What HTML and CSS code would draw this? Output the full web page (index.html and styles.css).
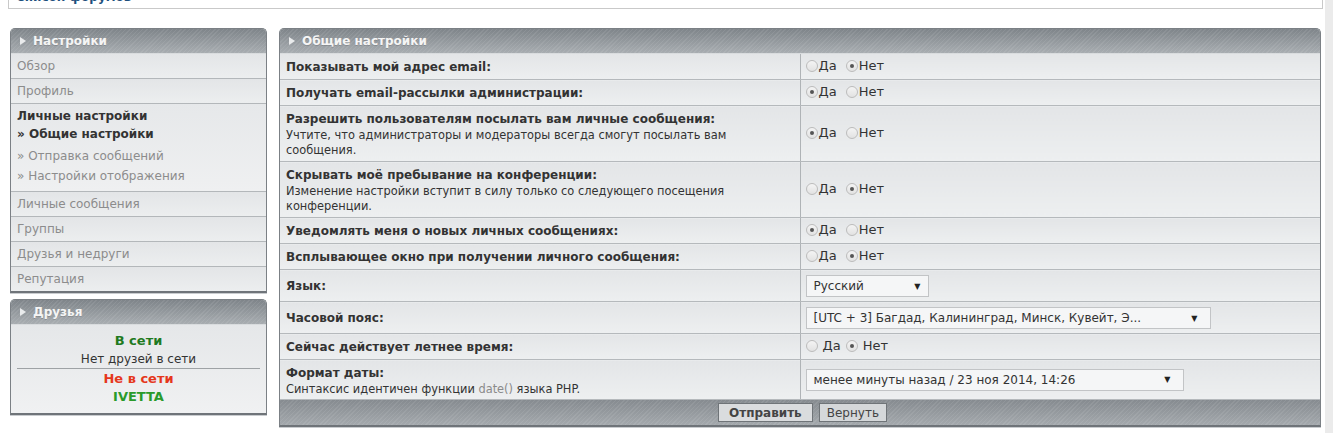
FILE: index.html
```html
<!DOCTYPE html>
<html lang="ru">
<head>
    <meta charset="UTF-8">
    <title>Личный раздел - Общие настройки</title>
    <link rel="stylesheet" href="styles.css">
</head>
<body>
<div class="page">
    <div class="navbar">
        <a href="#" class="crumbs">Список форумов</a>
        <span class="tz">Часовой пояс: UTC + 3 часа</span>
    </div>

    <div class="layout">
        <!-- Left column -->
        <aside class="sidebar">
            <div class="panel">
                <h3 class="panel-head"><span class="arrow"></span>Настройки</h3>
                <ul class="menu">
                    <li><a href="#">Обзор</a></li>
                    <li><a href="#">Профиль</a></li>
                    <li class="active">
                        <div class="menu-title">Личные настройки</div>
                        <div class="sub current">» Общие настройки</div>
                        <div class="sub"><a href="#">» Отправка сообщений</a></div>
                        <div class="sub"><a href="#">» Настройки отображения</a></div>
                    </li>
                    <li><a href="#">Личные сообщения</a></li>
                    <li><a href="#">Группы</a></li>
                    <li><a href="#">Друзья и недруги</a></li>
                    <li><a href="#">Репутация</a></li>
                </ul>
            </div>

            <div class="panel">
                <h3 class="panel-head"><span class="arrow"></span>Друзья</h3>
                <div class="friends">
                    <div class="online">В сети</div>
                    <div>Нет друзей в сети</div>
                    <div class="divider"></div>
                    <div class="offline">Не в сети</div>
                    <div class="friend">IVETTA</div>
                </div>
            </div>
        </aside>

        <!-- Main settings -->
        <main class="panel main-panel">
            <h3 class="panel-head"><span class="arrow"></span>Общие настройки</h3>
            <table class="settings">
                <colgroup><col class="col-label"><col></colgroup>
                <tr>
                    <td class="label"><b>Показывать мой адрес email:</b></td>
                    <td class="value"><span class="opt"><span class="radio"></span>Да</span><span class="opt"><span class="radio on"></span>Нет</span></td>
                </tr>
                <tr>
                    <td class="label"><b>Получать email-рассылки администрации:</b></td>
                    <td class="value"><span class="opt"><span class="radio on"></span>Да</span><span class="opt"><span class="radio"></span>Нет</span></td>
                </tr>
                <tr>
                    <td class="label"><b>Разрешить пользователям посылать вам личные сообщения:</b>
                        <div class="desc">Учтите, что администраторы и модераторы всегда смогут посылать вам сообщения.</div></td>
                    <td class="value"><span class="opt"><span class="radio on"></span>Да</span><span class="opt"><span class="radio"></span>Нет</span></td>
                </tr>
                <tr>
                    <td class="label"><b>Скрывать моё пребывание на конференции:</b>
                        <div class="desc">Изменение настройки вступит в силу только со следующего посещения конференции.</div></td>
                    <td class="value"><span class="opt"><span class="radio"></span>Да</span><span class="opt"><span class="radio on"></span>Нет</span></td>
                </tr>
                <tr>
                    <td class="label"><b>Уведомлять меня о новых личных сообщениях:</b></td>
                    <td class="value"><span class="opt"><span class="radio on"></span>Да</span><span class="opt"><span class="radio"></span>Нет</span></td>
                </tr>
                <tr>
                    <td class="label"><b>Всплывающее окно при получении личного сообщения:</b></td>
                    <td class="value"><span class="opt"><span class="radio"></span>Да</span><span class="opt"><span class="radio on"></span>Нет</span></td>
                </tr>
                <tr class="tall">
                    <td class="label"><b>Язык:</b></td>
                    <td class="value"><div class="select lang">Русский<span class="caret">▼</span></div></td>
                </tr>
                <tr class="tall">
                    <td class="label"><b>Часовой пояс:</b></td>
                    <td class="value"><div class="select tz-select">[UTC + 3] Багдад, Калининград, Минск, Кувейт, Э...<span class="caret">▼</span></div></td>
                </tr>
                <tr>
                    <td class="label"><b>Сейчас действует летнее время:</b></td>
                    <td class="value spaced"><span class="opt"><span class="radio"></span>Да</span><span class="opt"><span class="radio on"></span>Нет</span></td>
                </tr>
                <tr class="last">
                    <td class="label"><b>Формат даты:</b>
                        <div class="desc">Синтаксис идентичен функции <a href="#">date()</a> языка PHP.</div></td>
                    <td class="value"><div class="select date-select">менее минуты назад / 23 ноя 2014, 14:26<span class="caret">▼</span></div></td>
                </tr>
            </table>
            <div class="panel-foot">
                <button class="btn btn-main">Отправить</button>
                <button class="btn">Вернуть</button>
            </div>
        </main>
    </div>
</div>
</body>
</html>
```

FILE: styles.css
```css
* {
    margin: 0;
    padding: 0;
    box-sizing: border-box;
}

body {
    background: #ebebeb;
    font-family: 'DejaVu Sans', Verdana, sans-serif;
    font-size: 12px;
    color: #333;
}

a {
    text-decoration: none;
}

.page {
    display: flow-root;
    width: 1325px;
    min-height: 100vh;
    background: #fff;
}

/* top bar, mostly scrolled off */
.navbar {
    width: 1315px;
    height: 21px;
    margin: -12px 0 0 8px;
    padding: 0 7px 3px;
    border: 1px solid #c9c9c9;
    border-top: none;
    display: flex;
    justify-content: space-between;
    align-items: center;
}

.navbar .crumbs {
    color: #1d4f7c;
    font-weight: bold;
}

.navbar .tz {
    font-size: 11px;
    color: #444;
}

.layout {
    display: flex;
    align-items: flex-start;
    gap: 12px;
    margin-top: 19px;
    padding-left: 10px;
}

.sidebar {
    width: 257px;
    display: flex;
    flex-direction: column;
    gap: 6px;
}

.panel {
    border: 1px solid #7b8085;
    border-bottom: 2px solid #6f7479;
    border-radius: 5px 5px 0 0;
    overflow: hidden;
    background: #e8eaeb;
    box-shadow: 0 1px 0 #c9cccf;
}

.panel-head {
    height: 25px;
    padding-left: 9px;
    display: flex;
    align-items: center;
    color: #f5f5f5;
    font-size: 12px;
    font-weight: bold;
    text-shadow: 0 1px 0 rgba(0, 0, 0, 0.15);
    background:
        repeating-linear-gradient(135deg, rgba(255, 255, 255, 0.08) 0 1px, transparent 1px 3px),
        linear-gradient(#7f858a, #a8adb1);
    border-bottom: 1px solid #d9dcde;
}

.arrow {
    width: 0;
    height: 0;
    border-left: 6px solid #e9ebec;
    border-top: 4px solid transparent;
    border-bottom: 4px solid transparent;
    margin-right: 7px;
}

/* menu */
.menu {
    list-style: none;
}

.menu li {
    padding: 4px 6px;
    line-height: 16px;
    background: linear-gradient(#e3e5e7, #eceeef);
    border-bottom: 1px solid #b3b7ba;
}

.menu li:last-child {
    border-bottom: none;
}

.menu a {
    color: #8c8c8c;
}

.menu .active {
    padding-top: 3px;
    padding-bottom: 5px;
    background: linear-gradient(#e6e8ea, #eff0f1);
}

.menu-title {
    font-weight: bold;
    line-height: 18px;
}

.menu .sub {
    line-height: 20px;
}

.menu .sub.current {
    font-weight: bold;
    line-height: 18px;
    margin-bottom: 3px;
}

/* friends */
.friends {
    padding: 7px 6px 7px;
    text-align: center;
    line-height: 18px;
    background: linear-gradient(#e5e7e9, #f0f1f2);
}

.friends .online {
    color: #1f7a1f;
    font-weight: bold;
    font-size: 13px;
}

.friends .divider {
    height: 1px;
    background: #9ea2a5;
    margin: 0 0 1px;
}

.friends .offline {
    color: #e5371c;
    font-weight: bold;
    font-size: 13px;
}

.friends .friend {
    color: #2a9a2a;
    font-weight: bold;
    font-size: 13px;
}

/* main settings */
.main-panel {
    width: 1042px;
}

.settings {
    width: 100%;
    border-collapse: collapse;
    table-layout: fixed;
}

.settings .col-label {
    width: 520px;
}

.settings td {
    padding: 5px 6px 3px;
    vertical-align: middle;
    background: linear-gradient(#e3e5e7, #edeff0);
    border-bottom: 1px solid #b5b9bc;
}

.settings td.label {
    border-right: 1px solid #afb3b6;
}

.settings b {
    display: block;
    line-height: 17px;
}

.settings .desc {
    font-size: 11.4px;
    line-height: 15px;
}

.settings .last .desc {
    line-height: 14px;
}

.settings .desc a {
    color: #8a8a8a;
}

.settings td.value {
    padding: 4px 6px 4px 5px;
    font-size: 13px;
}

.settings tr.tall td.value {
    padding-top: 5px;
    padding-bottom: 4px;
}

.opt {
    display: inline-flex;
    align-items: center;
    margin-right: 9px;
    color: #333;
}

.radio {
    width: 12px;
    height: 12px;
    border: 1px solid #bcbcbc;
    border-radius: 50%;
    background: linear-gradient(#f4f4f4, #e2e2e2);
    margin-right: 1px;
    position: relative;
}

.radio.on::after {
    content: "";
    position: absolute;
    left: 3px;
    top: 3px;
    width: 4px;
    height: 4px;
    border-radius: 50%;
    background: #555;
}

.spaced .radio {
    margin-right: 5px;
}

.spaced .opt {
    margin-right: 5px;
}

.select {
    height: 22px;
    padding: 0 7px;
    display: flex;
    align-items: center;
    justify-content: space-between;
    border: 1px solid #c2c4c6;
    background: #f5f6f7;
    font-size: 12px;
    color: #333;
}

.select .caret {
    font-size: 8px;
    color: #222;
}

.select.lang {
    width: 123px;
}

.select.tz-select {
    width: 405px;
    padding-right: 12px;
}

.select.date-select {
    width: 378px;
    padding-right: 12px;
}

.panel-foot {
    height: 25px;
    padding-left: 5px;
    display: flex;
    justify-content: center;
    align-items: center;
    gap: 6px;
    background:
        repeating-linear-gradient(135deg, rgba(255, 255, 255, 0.08) 0 1px, transparent 1px 3px),
        linear-gradient(#868b90, #a4a9ad);
}

.btn {
    height: 19px;
    padding: 0 7px;
    border: 1px solid #6f7478;
    background: #d5d8da;
    font-family: 'DejaVu Sans', Verdana, sans-serif;
    font-size: 12px;
    color: #444;
    cursor: pointer;
}

.btn-main {
    font-weight: bold;
    padding: 0 10px;
    background: #dadcde;
}
```
